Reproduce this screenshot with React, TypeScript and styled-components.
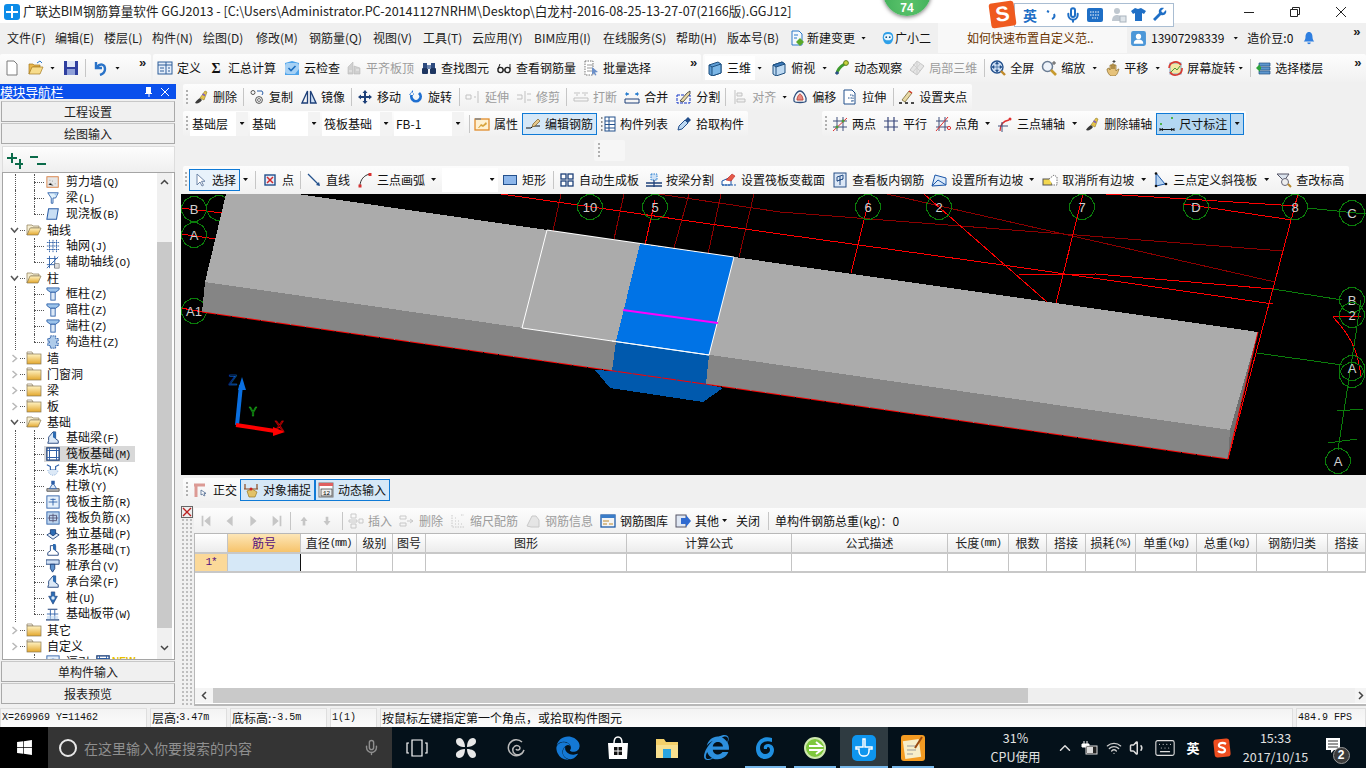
import React from "react";
import styled, { createGlobalStyle } from "styled-components";
import { FaEdge, FaInternetExplorer, FaWindows } from "react-icons/fa";
import { Mic, ChevronUp, Wifi, Volume1, Keyboard } from "lucide-react";

const Global = createGlobalStyle`
  html, body { margin: 0; padding: 0; background: #f0f0f0; overflow: hidden; }
  * { box-sizing: border-box; }
  #root { width: 1366px; height: 768px; }
`;
const CJK = `"Noto Sans CJK SC", "Liberation Sans", sans-serif`;
const MONO = `"Liberation Mono", "Noto Sans CJK SC", monospace`;

/* ---------- small drawings ---------- */
const B = "#2b5ea7", L = "#9cc3ea", D = "#1d3f78";
const icons: Record<string, React.ReactNode> = {
  new: <path d="M3 1h7l3 3v11H3z" fill="#fff" stroke="#7a7a7a" />,
  open: <><path d="M1 14V4h4l1 1h6v2H5l-4 7z" fill="#e8b64c" stroke="#a57a20" strokeWidth=".7" /><path d="M1 14l3-7h11l-3 7z" fill="#f7dc8b" stroke="#a57a20" strokeWidth=".7" /><path d="M9 3l3-2 2 2" fill="none" stroke="#2b78c9" /></>,
  save: <><rect x="1" y="1" width="14" height="14" fill="#2f3f9f" /><rect x="4" y="1" width="8" height="6" fill="#dfe6f6" /><rect x="4" y="9" width="8" height="6" fill="#8fa0d8" /></>,
  undo: <path d="M4 2v6h6M5 7c3-4 8-3 8 2 0 3-2 5-5 6" fill="none" stroke="#2a73c8" strokeWidth="2.4" />,
  def: <><rect x="1" y="2" width="14" height="12" fill="#e5eefa" stroke="#2f5f9a" /><path d="M1 5h14M9 2v12M3 8h4M3 11h4M11 8h2M11 11h2" stroke="#2f5f9a" /></>,
  sum: <text x="8" y="13" fontSize="14" fontWeight="700" textAnchor="middle" fontFamily="Liberation Serif" fill="#111">Σ</text>,
  cloud: <><path d="M1 3l7-2 7 2v12H1z" fill="#4da3ea" /><path d="M4 3h8a3 3 0 0 1 3 3v3l-4 5H4a3 3 0 0 1-3-3V6a3 3 0 0 1 3-3z" fill="#fff" opacity=".5" /><path d="M4.5 8l2.5 2.5 4.5-4.5" fill="none" stroke="#1d6fc0" strokeWidth="1.6" /></>,
  flat: <><path d="M2 14V7l5-5v12zM8 14V6l6 2v6z" fill="#bdbdbd" stroke="#999" strokeWidth=".6" /><path d="M3 11h3M10 10h3" stroke="#e8e8e8" /></>,
  binoc: <><rect x="2" y="3" width="4" height="5" fill="#2c4a7e" /><rect x="10" y="3" width="4" height="5" fill="#2c4a7e" /><rect x="1" y="8" width="6" height="6" rx="1" fill="#1d3560" /><rect x="9" y="8" width="6" height="6" rx="1" fill="#1d3560" /><rect x="6" y="5" width="4" height="4" fill="#6e87b0" /></>,
  glass: <><circle cx="4.5" cy="10" r="2.6" fill="none" stroke="#222" strokeWidth="1.4" /><circle cx="11.5" cy="10" r="2.6" fill="none" stroke="#222" strokeWidth="1.4" /><path d="M7 10h2M2 9l2-5M14 9V4" stroke="#222" /></>,
  batch: <><path d="M2 1h8v14H2z" fill="#fff" stroke="#777" strokeDasharray="1.5 1" /><path d="M4 5h6M4 8h5M4 11h5" stroke="#999" /><path d="M9 7l6 5-3 .5 1.5 2.5-1.4.6-1.4-2.5L9 15z" fill="#6b8fc9" /></>,
  cube: <><path d="M2 5l9-3 3 2v9l-9 3-3-2z" fill="#5f9fd6" stroke="#1d4f7f" /><path d="M5 7l9-3v9l-9 3z" fill="#7ab6e6" stroke="#1d4f7f" /><path d="M2 5l3 2" stroke="#1d4f7f" /></>,
  top: <><path d="M2 5l9-3 3 2v9l-9 3-3-2z" fill="#bdd9f2" stroke="#1d4f7f" /><path d="M5 7l9-3-3-2-9 3z" fill="#3d79b8" stroke="#1d4f7f" /><path d="M5 7v9" stroke="#1d4f7f" /></>,
  orbit: <><path d="M3 14c0-4 4-8 9-11" stroke="#3f9a2e" strokeWidth="3" fill="none" /><path d="M2 12l2 2" stroke="#2d4d8c" strokeWidth="3" /><circle cx="12" cy="3" r="2.4" fill="#c8d43c" stroke="#5f7a1e" /></>,
  local: <><path d="M8 1l7 5-7 9-7-5z" fill="#dcdcdc" stroke="#aaa" /><path d="M4 4l7 7M8 1v14M12 3L4 12" stroke="#bbb" /></>,
  full: <><circle cx="7" cy="7" r="6" fill="#cfe0f5" stroke="#23508c" strokeWidth="1.4" /><path d="M7 2v10M2 7h10M7 2L5.5 4h3zM7 12l-1.5-2h3zM2 7l2-1.5v3zM12 7l-2-1.5v3z" stroke="#23508c" fill="#23508c" strokeWidth=".6" /><path d="M11 11l4 4" stroke="#c08a2a" strokeWidth="2.4" /></>,
  zoom: <><circle cx="6.5" cy="6.5" r="5" fill="#eef3fa" stroke="#6b7d94" strokeWidth="1.5" /><path d="M10 10l5 5" stroke="#c79a2e" strokeWidth="2.6" /><path d="M13 1v4M11 3h4" stroke="#555" /></>,
  pan: <><path d="M3 9l2-1 1 2V5h2v4-5h2v5-4h2v6c1-1 2-2 3-2-1 3-2 7-5 7H7C5 15 3 12 3 9z" fill="#e6c27a" stroke="#8a6a28" strokeWidth=".7" /><path d="M10 0v3M8.5 1.5h3" stroke="#444" /></>,
  rotate: <><rect x="3" y="3" width="11" height="11" fill="#f4e7a4" stroke="#7aa4c8" /><path d="M4 12l4-4 2 2 3-4" stroke="#4b9a3a" fill="none" /><path d="M2 8a6.5 6.5 0 0 1 12-3M15 8a6.5 6.5 0 0 1-12 4" stroke="#d83a30" strokeWidth="1.6" fill="none" /></>,
  floor: <><path d="M4 3h11v3H4zM4 7h11v3H4zM4 11h11v3H4z" fill="#5e97cf" stroke="#1d4f7f" strokeWidth=".7" /><path d="M1 8l4-4v2.5h1v3H5V12z" fill="#2da33b" /></>,
  del: <><path d="M2 14c2 1 5 0 7-3L7 9c-2 1-4 3-5 5z" fill="#3a3a3a" /><path d="M7 9l5-7 2 1-3 8z" fill="#e6c34a" stroke="#8e7a25" strokeWidth=".6" /><path d="M9.5 5l2.5 1.5" stroke="#7a5dc0" strokeWidth="1.5" /></>,
  copy: <><circle cx="4" cy="3.5" r="2" fill="none" stroke="#555" /><circle cx="10" cy="11" r="3.4" fill="none" stroke="#555" /><circle cx="10" cy="11" r="1.5" fill="none" stroke="#777" /><path d="M8 2h5l1 2-1 2" stroke="#2b5ea7" fill="none" /></>,
  mirror: <><path d="M6.5 2v12H1z" fill="none" stroke={D} strokeWidth="1.3" /><path d="M9.5 2v12H15z" fill="#cfe0f5" stroke={D} strokeWidth="1.3" /></>,
  move: <path d="M8 1l2.5 3H9v3h3V5.5L15 8l-3 2.5V9H9v3h1.500L8 15l-2.500-3H7V9H4v1.500L1 8l3-2.500V7h3V4H5.500z" fill={D} />,
  rot: <path d="M4 3a6 6 0 1 0 8 0l-2 2a3.200 3.200 0 1 1-4 0zM5 1v5H1z" fill="#1f6fd0" />,
  ext: <path d="M1 6h5v4H1zM9 8h2M13 2v12" stroke="#a5a5a5" fill="none" />,
  trim: <path d="M1 6h5v4H1M9 2v12M11 5h4M11 11h4" stroke="#a5a5a5" fill="none" />,
  brk: <path d="M1 4h6M9 4h6M1 12h14V9H1zM5 6l-2 0M13 6h-2" stroke="#a5a5a5" fill="none" />,
  merge: <><path d="M1 10h14v4H1z" fill="none" stroke={D} /><path d="M2 3l3 2-3 2zM14 3l-3 2 3 2z" fill="#2b7fd0" /><path d="M1 5h4M11 5h4" stroke="#2b7fd0" /></>,
  split: <><rect x="1" y="6" width="13" height="8" fill="none" stroke="#1235c8" strokeDasharray="3 1" /><path d="M4 12l7-8 3-2 0 3-7 8z" fill="#e8d9a6" stroke="#333" strokeWidth=".8" /></>,
  align: <path d="M3 1v14M5 4h5v3H5zM5 10h8v3H5z" stroke="#a5a5a5" fill="#eee" />,
  offset: <><path d="M2 12c-1-4 3-10 6-10s7 6 6 10c0 2-12 2-12 0z" fill="none" stroke="#2e4f7e" strokeWidth="1.3" /><path d="M5 11c0-3 2-6 3-6s3 3 3 6z" fill="#e88a80" stroke="#c2483c" /></>,
  stretch: <><path d="M2 1h8l3 3v11H2z" fill="#fff" stroke="#23508c" /><path d="M8 6h3M6 9h5M9 12h2M11 6v7" stroke="#23508c" strokeDasharray="1.5 1" /></>,
  grip: <><path d="M3 11l7-9 3 2-7 9z" fill="#e8d9a6" stroke="#6a5a22" strokeWidth=".7" /><path d="M10 2l3 2" stroke="#d83a30" strokeWidth="1.5" /><path d="M0 14h3M6 14h3M12 14h3" stroke="#111" strokeWidth="1.5" /></>,
  attr: <><rect x="1" y="3" width="14" height="11" fill="#fff1d2" stroke="#e08d2c" strokeWidth="1.3" /><path d="M1 3h6" stroke="#888" strokeWidth="1.6" /><path d="M4 12l3-4 2 1 3-3 1 2-4 3-2-1-2 2z" fill="#d8a43c" /></>,
  edit: <><path d="M1 12h5l2-2h7" stroke="#111" fill="none" /><path d="M8 8l5-5 2 2-5 5-3 1z" fill="#e6c98b" stroke="#7a5a22" strokeWidth=".7" /></>,
  list: <><path d="M1 2h2M1 6h2M1 10h2M1 14h2" stroke="#222" strokeWidth="1.2" strokeDasharray="1.5 1" /><rect x="5" y="1" width="10" height="14" fill="#fff" stroke="#23508c" /><path d="M5 5h10M5 8.5h10M5 12h10M9 1v14" stroke="#23508c" /></>,
  pick: <><path d="M2 14l1-4 6-6 3 3-6 6z" fill="#bcd8f2" stroke="#234f8c" /><path d="M9 4l3-3 3 3-3 3z" fill="#234f8c" /></>,
  two: <><path d="M1 5h14M1 11h14M5 1v14M11 1v14" stroke="#40507c" /><path d="M1 15L15 2" stroke="#e03030" /><circle cx="5" cy="11" r="1.5" fill="#4b9a3a" /><circle cx="11" cy="5" r="1.5" fill="#4b9a3a" /></>,
  para: <path d="M1 5h14M1 11h14M5 1v14M11 1v14" stroke="#39477a" strokeWidth="1.2" />,
  angle: <><path d="M1 5h12M1 11h12M4 1v14M10 1v14" stroke="#40507c" /><path d="M1 15L13 1" stroke="#e03030" /><circle cx="14" cy="12" r="1.6" fill="none" stroke="#e03030" /></>,
  arc3: <><path d="M3 15c0-7 3-10 9-11" stroke="#e03030" fill="none" strokeWidth="1.3" /><path d="M1 10h10M5 6v10" stroke="#40507c" /><circle cx="13" cy="3" r="1.5" fill="#e03030" /></>,
  dim: <><path d="M1 12v3M15 12v3M1 13.5h14" stroke="#111" /><path d="M1 13.5l3-1.5v3zM15 13.5l-3-1.500v3z" fill="#111" /><rect x="1" y="7" width="2" height="2" fill="#4bb34a" /><rect x="12" y="1" width="2" height="2" fill="#4bb34a" /></>,
  sel: <path d="M5 2v11l3-3 2 4 1.5-.7-2-4H13z" fill="#fff" stroke="#6f86a8" />,
  pt: <><rect x="3" y="3" width="10" height="10" fill="#e8eefb" stroke="#23508c" strokeWidth="1.4" /><path d="M5 5l6 6M11 5l-6 6" stroke="#d02a2a" strokeWidth="1.5" /></>,
  line: <><path d="M2 2l11 11" stroke="#23508c" strokeWidth="1.3" /><path d="M14 14l-4-1 3-3z" fill="#23508c" /></>,
  arc: <><path d="M3 14c0-6 4-11 10-12" stroke="#333" fill="none" /><rect x="1.5" y="12.5" width="3" height="3" fill="#d83030" /><rect x="11.5" y="1" width="3" height="3" fill="#d83030" /></>,
  rect: <rect x="1.500" y="3.500" width="13" height="9" fill="#8db6ea" stroke="#23508c" />,
  auto: <><rect x="2" y="2" width="5" height="5" fill="#fff" stroke={D} strokeWidth="1.3" /><rect x="9" y="2" width="5" height="5" fill="#fff" stroke={D} strokeWidth="1.3" /><rect x="2" y="9" width="5" height="5" fill="#fff" stroke={D} strokeWidth="1.3" /><rect x="9" y="9" width="5" height="5" fill="#fff" stroke={D} strokeWidth="1.3" /></>,
  beam: <><rect x="5" y="2" width="6" height="6" fill="#cfe2f6" stroke="#2b7fd0" strokeDasharray="1.5 1" /><path d="M0 11h16M0 14h16M8 8v7" stroke={D} strokeWidth="1.3" /></>,
  varsec: <><path d="M1 9l9-4v8H1z" fill="#fff" stroke="#1b56a8" /><path d="M5 8l6-6 3 2-4 5z" fill="#e55a48" stroke="#b22" strokeWidth=".6" /><path d="M1 13h14" stroke="#1b56a8" strokeDasharray="2 1" /></>,
  view: <><rect x="2" y="1" width="12" height="14" fill="#dbe7f6" stroke="#274f86" /><path d="M5 5l6-2v4l-6 2zM5 9l6-2M8 4v9" stroke="#274f86" fill="none" /></>,
  slope: <><path d="M1 14l3-11 11 3v7z" fill="#dceaf9" stroke="#1b56a8" /><path d="M1 14l6-6 8 5" stroke="#1b56a8" fill="none" /></>,
  noslope: <><rect x="1" y="7" width="9" height="6" fill="#f3d74f" stroke="#555" /><path d="M7 7l5-4 3 2v8h-4" fill="#fff" stroke="#777" strokeDasharray="1.5 1" /></>,
  s3: <><path d="M3 1l9 11-9 2z" fill="#b7d4f2" stroke="#1b56a8" /><circle cx="3" cy="1.5" r="1.3" fill="#111" /><circle cx="3" cy="14" r="1.3" fill="#111" /><circle cx="13" cy="12" r="1.3" fill="#111" /></>,
  height: <><path d="M1 2h12L8 9z" fill="#dce4ee" stroke="#556" /><circle cx="9" cy="10" r="3.5" fill="#eee" stroke="#667" /><path d="M12 12l3 3" stroke="#b98a2e" strokeWidth="2" /></>,
  ortho: <><path d="M3 15V3M1 3h11" stroke="#dc9a94" strokeWidth="3" /><path d="M8 8v5l1.5-1 1.5 2 1-.6-1-2h2z" fill="#fff" stroke="#4f6a90" strokeWidth=".8" /></>,
  snap: <><path d="M2 2v5M14 2v5M1 7h14" stroke="#8a4a22" strokeWidth="1.2" /><path d="M4 9l5-2 5 3-2 5H6z" fill="#e2c267" stroke="#9a7a22" strokeWidth=".7" /><circle cx="8" cy="7" r="1.5" fill="#c22" /></>,
  dyn: <><rect x="1" y="1" width="14" height="14" fill="#fff" stroke="#777" /><rect x="1" y="1" width="14" height="3" fill="#e06060" /><rect x="3" y="7" width="11" height="7" fill="#eee" stroke="#333" strokeWidth=".7" /><text x="8.5" y="13" fontSize="6" textAnchor="middle" fontFamily="Liberation Mono" fill="#000">12</text></>,
  first: <path d="M3 2v12h2V2zM13 2v12L6 8z" fill="#c6c6c6" />,
  prev: <path d="M11 2v12L4 8z" fill="#c6c6c6" />,
  next: <path d="M5 2v12l7-6z" fill="#c6c6c6" />,
  last: <path d="M13 2v12h-2V2zM3 2v12l7-6z" fill="#c6c6c6" />,
  up: <path d="M8 3l4 5H9.5v5h-3V8H4z" fill="#c6c6c6" />,
  down: <path d="M8 13l4-5H9.5V3h-3v5H4z" fill="#c6c6c6" />,
  ins: <path d="M3 1h5v4H3zM3 11h5v4H3zM1 7h8v2H1zM11 6h4v4h-4z" fill="none" stroke="#b0b0b0" />,
  delr: <path d="M1 3h6v3H1zM1 10h6v3H1zM8 8h6M11 6l3 2-3 2" fill="none" stroke="#b0b0b0" />,
  scale: <path d="M2 2v12h12M5 11h1M8 11h1M11 11h1M5 8h1M8 8h1M5 5h1M11 2h3" fill="none" stroke="#b0b0b0" strokeDasharray="1.5 1" />,
  info: <path d="M2 13l5-10h4l3 4v7H6z" fill="#ddd" stroke="#b0b0b0" />,
  lib: <><rect x="1" y="2" width="14" height="12" fill="#f4f4f4" stroke="#1e5ba8" strokeWidth="1.3" /><rect x="1" y="2" width="14" height="3" fill="#3a7cc8" /><path d="M3 8h6M3 11h4M9 11h4" stroke="#c08a2a" /></>,
  other: <><rect x="1" y="2" width="10" height="12" fill="#dfe7f3" stroke="#556" /><path d="M6 5h5V2l5 6-5 6v-3H6z" fill="#2f6ad0" /></>,
  user: <><rect x="1" y="1" width="14" height="14" rx="2" fill="#4c97d8" /><circle cx="8" cy="6" r="2.5" fill="#fff" /><path d="M3.5 13c0-3 2-4 4.5-4s4.5 1 4.5 4z" fill="#fff" /></>,
  bell: <path d="M8 1c3 0 4 3 4 6 0 2 1 4 2 5H2c1-1 2-3 2-5 0-3 1-6 4-6zM6 13h4a2 2 0 0 1-4 0z" fill="#2f7fe0" />,
  doc: <><path d="M3 1h7l3 3v11H3z" fill="#f4f8fc" stroke="#2b78c9" /><path d="M5 5h4M5 8h3" stroke="#2b78c9" /><path d="M11 8l4 4-4 4-4-4z" fill="#5aa82a" /></>,
  face: <><path d="M8 1c4 0 6 2 6 6s-2 8-6 8-6-4-6-8 2-6 6-6z" fill="#2fa0e8" /><ellipse cx="8" cy="7" rx="4.6" ry="3.6" fill="#e8f6ff" /><circle cx="6" cy="7" r="1" fill="#14527e" /><circle cx="10" cy="7" r="1" fill="#14527e" /></>,
  plus: <path d="M4 0v4H0v2h4v4h2V6h4V4H6V0zM12 6v4H8v2h4v4h2v-4h2v-2h-2V6z" fill="#0b6b4a" />,
  minus: <path d="M0 3h8v2H0zM7 10h9v2H7z" fill="#0b6b4a" />,
  /* tree */
  wall: <><rect x="1" y="2" width="13" height="12" fill="#e6e6e6" stroke="#d77a3a" /><path d="M3 11l2-2 3 3M7 7h1M10 10h1M4 6h1" stroke="#999" /></>,
  tbeam: <><path d="M2 2h12L11 8H8v6H6V8z" fill="#dff0fb" stroke={B} /><path d="M9 3l3-1v4z" fill={L} /></>,
  slab: <path d="M3 2h11l-2 12H1z" fill="#c8def4" stroke={B} strokeWidth="1.2" />,
  grid: <path d="M1 4h14M1 8h14M1 12h14M4 1v14M8 1v14M12 1v14" stroke={B} strokeDasharray="2 .5" />,
  auxg: <><path d="M1 4h12M1 11h12M4 1v14M10 1v14" stroke={B} /><path d="M1 15L14 2" stroke={B} /><rect x="10" y="10" width="5" height="5" fill="#ddd" stroke="#555" strokeWidth=".6" /></>,
  col: <><path d="M1 1h14v2L11 6H5L1 3z" fill={L} stroke={B} /><rect x="5.5" y="6" width="5" height="9" fill="#dce9f7" stroke={B} /></>,
  scol: <path d="M5 1h6v3h3v3h-2v2h2v3h-3v3H5v-3H2V9h2V7H2V4h3z" fill="#aecbea" stroke={B} strokeDasharray="2 .6" />,
  fb: <><path d="M2 14h12v-3l-3-2V1H8L3 7v4z" fill="#dce9f7" stroke={D} /><path d="M8 1l3 0v8l-3-2z" fill="#2b6cb4" /></>,
  raft: <><rect x="1" y="1" width="14" height="14" fill="#fff" stroke={D} strokeWidth="1.5" /><rect x="4" y="4" width="8" height="8" fill="#fff" stroke={D} /><path d="M1 4h14M1 12h14M4 1v14M12 1v14" stroke={B} /></>,
  pit: <><path d="M1 2l4 2v4h6V4l4-2" fill="none" stroke={B} strokeWidth="1.3" /><path d="M2 8c1 4 3 6 6 6s5-2 6-6" fill="#dce9f7" stroke="#8fb0d8" strokeDasharray="1 1" /></>,
  pier: <><path d="M1 11h14v3H1z" fill="#bbb" stroke="#555" /><path d="M4 11l3-5h2l3 5z" fill="#dce9f7" stroke={B} /><path d="M6 2h4v4H6z" fill={B} /></>,
  rm: <><rect x="1" y="1" width="14" height="14" fill="#e5f0fb" stroke={B} /><path d="M3 8h10M8 4v8M5 5h6" stroke={B} /></>,
  rn: <><rect x="1" y="1" width="14" height="14" fill="#bdd5ef" stroke={B} /><path d="M2 8h12M8 3v10M4 5h8v6H4z" stroke="#557" fill="none" /></>,
  iso: <><path d="M1 9l7-4 7 4-7 5z" fill="#e5f0fb" stroke={D} /><path d="M5 3h6v5l-3 2-3-2z" fill="#2b6cb4" stroke={D} /></>,
  strip: <><path d="M2 14h12v-3l-3-2V3H5v6L2 11z" fill="#fff" stroke={D} /><path d="M8 1h3v8l-3-2z" fill="#2b6cb4" /></>,
  cap: <><path d="M0 1h15v5H0z" fill="#cfe0f5" stroke={D} /><path d="M5 6h5v5l-2.5 4L5 11z" fill="#5f94d0" stroke={D} /></>,
  pile: <><path d="M6 1h4v5h3L8 15 3 6h3z" fill="#2b6cb4" stroke={D} strokeWidth=".7" /><circle cx="8" cy="8" r="2" fill="#dce9f7" /></>,
  band: <><path d="M0 14h15v1.5H0zM2 2h11v1H2z" fill={D} /><path d="M5 3v11M10 3v11M1 8h13" stroke={B} /><rect x="1" y="10" width="13" height="4" fill="#bcd6f0" opacity=".6" /></>,
};
const IconSvg = styled.svg<{ $s?: number }>`
  width: ${(p) => p.$s ?? 16}px;
  height: ${(p) => p.$s ?? 16}px;
  flex: none;
  display: block;
`;
const Ico: React.FC<{ n: string; s?: number }> = ({ n, s }) => (
  <IconSvg $s={s} viewBox="0 0 16 16">{icons[n]}</IconSvg>
);

/* ---------- shell ---------- */
const Screen = styled.div`
  position: relative;
  width: 1366px;
  height: 768px;
  overflow: hidden;
  display: flex;
  flex-direction: column;
  background: #f0f0f0;
  font: 12px/1 ${CJK};
  color: #111;
`;
const TitleBar = styled.header`
  height: 23px;
  flex: none;
  background: #fff;
  display: flex;
  align-items: center;
  padding-left: 4px;
`;
const TitleText = styled.span`
  margin-left: 3px;
  font-size: 12.6px;
  white-space: nowrap;
  color: #222;
`;
const WinControls = styled.div`
  margin-left: auto;
  margin-right: 2px;
  display: flex;
  align-items: center;
`;
const WinBtn = styled.div`
  width: 46px;
  height: 23px;
  display: flex;
  align-items: center;
  justify-content: center;
`;
const Menu = styled.nav`
  height: 30px;
  flex: none;
  display: flex;
  align-items: center;
  padding-left: 7px;
  white-space: nowrap;
`;
const MenuItem = styled.span<{ $w: number }>`
  width: ${(p) => p.$w}px;
  flex: none;
  color: #222;
`;
const Notice = styled.div`
  width: 189px;
  height: 30px;
  margin-left: 7px;
  padding-left: 29px;
  flex: none;
  display: flex;
  align-items: center;
  background: #f8f8f8;
  color: #6b3500;
`;
const Tool = styled.div<{ $ml?: number; $off?: boolean; $gap?: number }>`
  display: inline-flex;
  align-items: center;
  flex: none;
  gap: ${(p) => p.$gap ?? 4}px;
  margin-left: ${(p) => p.$ml ?? 0}px;
  color: ${(p) => (p.$off ? "#9c9c9c" : "#111")};
  white-space: nowrap;
  svg { ${(p) => (p.$off ? "filter: grayscale(1); opacity: .65;" : "")} }
`;
const HotTool = styled(Tool)<{ $fill?: string }>`
  height: 22px;
  padding: 0 3px 0 2px;
  border: 1px solid #0f7ad6;
  background: ${(p) => p.$fill ?? "#d6e8f7"};
`;
const Arrow = styled.i<{ $ml?: number }>`
  display: block;
  flex: none;
  width: 5px;
  height: 3px;
  margin-left: ${(p) => p.$ml ?? 0}px;
  background: #111;
  clip-path: polygon(0 0, 100% 0, 50% 100%);
`;
const ArrowBox = styled.div`
  width: 13px;
  height: 22px;
  flex: none;
  display: flex;
  align-items: center;
  justify-content: center;
  border: 1px solid #0f7ad6;
  border-left: 0;
  background: #b8d9f3;
`;
const Sep = styled.i<{ $ml?: number }>`
  display: block;
  width: 1px;
  height: 18px;
  flex: none;
  margin-left: ${(p) => p.$ml ?? 0}px;
  background: #c6c6c6;
`;
const More = styled.span<{ $ml?: number }>`
  margin-left: ${(p) => p.$ml ?? 0}px;
  margin-top: 2px;
  align-self: flex-start;
  flex: none;
  width: 8px;
  font: 700 13px/1 "Liberation Sans", sans-serif;
  color: #222;
`;
const Grip = styled.div<{ $w?: number }>`
  width: ${(p) => p.$w ?? 7}px;
  height: 15px;
  flex: none;
  display: flex;
  justify-content: center;
  &::before {
    content: "";
    width: 2px;
    height: 100%;
    background: repeating-linear-gradient(to bottom, #b0b0b0 0 2px, transparent 2px 4px);
  }
`;
const Bar = styled.div<{ $h: number; $ml?: number; $pr?: number }>`
  display: inline-flex;
  align-items: center;
  flex: none;
  height: ${(p) => p.$h}px;
  margin-left: ${(p) => p.$ml ?? 0}px;
  padding-right: ${(p) => p.$pr ?? 4}px;
  background: linear-gradient(#fdfdfd, #f1f1f1);
  border-radius: 2px;
`;
const MainToolRow = styled.div`
  height: 28px;
  flex: none;
  margin: 1px 0 2px;
  display: flex;
`;
const ThreeDBack = styled.div`
  display: inline-flex;
  align-items: center;
  flex: none;
  height: 24px;
  background: #fff;
  padding-right: 4px;
  margin-left: 2px;
  margin-right: -4px;
`;

/* ---------- left module panel ---------- */
const Body = styled.div`
  flex: 1;
  min-height: 0;
  display: flex;
`;
const Side = styled.aside`
  width: 176px;
  flex: none;
  display: flex;
  flex-direction: column;
  margin-right: 5px;
`;
const SideHead = styled.div`
  height: 15px;
  flex: none;
  display: flex;
  align-items: center;
  justify-content: space-between;
  background: #0a50ec;
  color: #fff;
  font-size: 13px;
  padding-right: 4px;
  letter-spacing: -.4px;
`;
const SideBtn = styled.div<{ $mt: number }>`
  height: 21px;
  flex: none;
  margin: ${(p) => p.$mt}px 1px 0;
  display: flex;
  align-items: center;
  justify-content: center;
  background: #f0f0f0;
  border: 1px solid #a9a9a9;
  border-top-color: #c8c8c8;
  color: #222;
`;
const TreeTools = styled.div`
  height: 26px;
  flex: none;
  margin: 2px 1px 0 2px;
  padding: 2px 0 0 4px;
  display: flex;
  align-items: center;
  gap: 7px;
  background: linear-gradient(#fdfdfd, #efefef);
  border: 1px solid #ddd;
  border-bottom: 0;
`;
const TreeBox = styled.div`
  height: 488px;
  flex: none;
  margin: 0 1px 0 2px;
  display: flex;
  border: 1px solid #a5a5a5;
  background: #fff;
  overflow: hidden;
`;
const TreeList = styled.ul`
  flex: 1;
  min-width: 0;
  margin: 0;
  padding: 1px 0 0;
  list-style: none;
  overflow: hidden;
`;
const TreeRow = styled.li<{ $branch?: boolean; $last?: boolean; $top?: boolean }>`
  position: relative;
  height: 16px;
  display: flex;
  align-items: center;
  padding-left: ${(p) => (p.$top ? 7 : 41)}px;
  white-space: nowrap;
  ${(p) =>
    p.$branch
      ? `&::before { content:""; position:absolute; left:31px; top:0; bottom:${p.$last ? 8 : 0}px; border-left:1px dotted #555; }
         &::after { content:""; position:absolute; left:31px; width:10px; top:8px; border-top:1px dotted #555; }`
      : ""}
  ${(p) =>
    p.$top
      ? `&::after { content:""; position:absolute; left:17px; width:5px; top:8px; border-top:1px dotted #555; }`
      : ""}
`;
const Trunk = styled.i`
  position: absolute;
  left: 12px;
  top: 0;
  bottom: 0;
  border-left: 1px dotted #555;
`;
const Node = styled.span<{ $sel?: boolean; $top?: boolean }>`
  display: inline-flex;
  align-items: center;
  height: 16px;
  gap: ${(p) => (p.$top ? 5 : 6)}px;
  padding-left: 2px;
  padding-right: ${(p) => (p.$sel ? 5 : 0)}px;
  background: ${(p) => (p.$sel ? "#d8d8d8" : "transparent")};
`;
const TreeChevron = styled.svg`
  width: 9px;
  height: 9px;
  flex: none;
  margin-right: 5px;
`;
const Code = styled.span`
  font: 11px/1 ${MONO};
  letter-spacing: -1.2px;
`;
const NewMark = styled.span`
  margin-left: -4px;
  color: #e8c000;
  font: 700 10px/1 "Liberation Sans", sans-serif;
`;
const VScroll = styled.div`
  width: 15px;
  flex: none;
  margin-right: 2px;
  display: flex;
  flex-direction: column;
  background: #f0f0f0;
`;
const ScrollEnd = styled.div<{ $h: number; $pos: string }>`
  height: ${(p) => p.$h}px;
  flex: none;
  display: flex;
  justify-content: center;
  align-items: ${(p) => p.$pos};
  padding: 5px 0 7px;
`;
const ScrollThumb = styled.div`
  flex: 1;
  background: #c9c9c9;
`;

/* ---------- main column ---------- */
const Main = styled.main`
  flex: 1;
  min-width: 0;
  display: flex;
  flex-direction: column;
`;
const Row = styled.div<{ $mt?: number }>`
  display: flex;
  flex: none;
  margin-top: ${(p) => p.$mt ?? 0}px;
  margin-left: 2px;
`;
const Combo = styled.div<{ $w: number; $ml?: number }>`
  width: ${(p) => p.$w}px;
  height: 24px;
  flex: none;
  margin-left: ${(p) => p.$ml ?? 0}px;
  display: flex;
  align-items: center;
  justify-content: space-between;
  background: #fff;
  padding-left: 2px;
  & > span { white-space: nowrap; }
`;
const ComboArrow = styled.div<{ $plain?: boolean }>`
  width: 12px;
  height: 100%;
  display: flex;
  align-items: center;
  justify-content: center;
  background: ${(p) => (p.$plain ? "transparent" : "#f3f3f3")};
`;
const FloatGrip = styled.div`
  height: 21px;
  margin: 4px 0 5px 413px;
  width: 31px;
  flex: none;
  padding-left: 2px;
  display: flex;
  align-items: center;
  background: #f6f6f6;
  border-radius: 2px;
`;
const Viewport = styled.div`
  height: 281px;
  flex: none;
  background: #000;
  margin-top: 1px;
  svg { display: block; }
`;
const Bottom = styled.section`
  height: 200px;
  flex: none;
  margin-top: 5px;
  display: flex;
`;
const DockStrip = styled.div`
  width: 13px;
  flex: none;
  display: flex;
  flex-direction: column;
`;
const DockClose = styled.div`
  height: 12px;
  width: 12px;
  flex: none;
  background: #eee;
  border: 1px solid #666;
  display: flex;
  align-items: center;
  justify-content: center;
`;
const DockDots = styled.div`
  flex: 1;
  background-image: radial-gradient(#bdbdbd 1px, transparent 1.2px);
  background-size: 4px 4px;
`;
const DockBody = styled.div`
  flex: 1;
  min-width: 0;
  display: flex;
  flex-direction: column;
`;
const GridBar = styled.div`
  height: 25px;
  flex: none;
  margin-top: 2px;
  display: flex;
  align-items: center;
  background: linear-gradient(#fdfdfd, #f0f0f0);
`;
const TableBox = styled.div`
  flex: 1;
  min-height: 0;
  display: flex;
  flex-direction: column;
  background: #fff;
  border-top: 1px solid #b8b8b8;
  border-left: 1px solid #b8b8b8;
  border-bottom: 2px solid #b8b8b8;
  overflow: hidden;
`;
const COLS = "33px 73px 56px 36px 33px 201px 165px 156px 61px 38px 39px 50px 61px 60px 71px 38px";
const Head = styled.div`
  display: grid;
  grid-template-columns: ${COLS};
  height: 20px;
  flex: none;
  border-bottom: 2px solid #c8c8c8;
`;
const HeadCell = styled.div<{ $cur?: boolean }>`
  display: flex;
  align-items: center;
  justify-content: center;
  overflow: hidden;
  white-space: nowrap;
  border-right: 1px solid #c4c4c4;
  background: ${(p) => (p.$cur ? "linear-gradient(#fde6b7,#f6c36b)" : "linear-gradient(#fff,#ececec)")};
  color: ${(p) => (p.$cur ? "#55107e" : "#222")};
`;
const DataRow = styled.div`
  display: grid;
  grid-template-columns: ${COLS};
  height: 19px;
  flex: none;
  border-bottom: 2px solid #c8c8c8;
`;
const DataCell = styled.div<{ $tone?: string; $black?: boolean }>`
  display: flex;
  align-items: center;
  justify-content: center;
  background: ${(p) => p.$tone ?? "#fff"};
  border-right: 1px solid ${(p) => (p.$black ? "#111" : "#c4c4c4")};
  color: #55107e;
`;
const TableFill = styled.div`
  flex: 1;
`;
const HScroll = styled.div`
  height: 15px;
  flex: none;
  margin-bottom: 1px;
  display: flex;
  background: #efefef;
`;
const HEnd = styled.div<{ $w: number }>`
  width: ${(p) => p.$w}px;
  flex: none;
  display: flex;
  align-items: center;
  justify-content: center;
  background: #f4f4f4;
`;
const HThumb = styled.div`
  width: 815px;
  flex: none;
  background: #c9c9c9;
`;
const HTrack = styled.div`
  flex: 1;
`;

/* ---------- status + task bar ---------- */
const Status = styled.footer`
  height: 19px;
  flex: none;
  display: flex;
  gap: 3px;
`;
const StatusCell = styled.div<{ $w: number; $mono?: boolean }>`
  width: ${(p) => p.$w}px;
  flex: none;
  display: flex;
  align-items: center;
  padding-left: 1px;
  white-space: nowrap;
  background: linear-gradient(#f3f3f3, #fcfcfc);
  border: 1px solid #dedede;
  border-bottom: 0;
  ${(p) => (p.$mono ? `font: 10px/1 ${MONO};` : "")}
`;
const StatusMono = styled.span`
  font: 10px/1 ${MONO};
`;
const Task = styled.footer`
  height: 41px;
  flex: none;
  display: flex;
  background: #04111a;
  color: #e2e2e2;
`;
const StartBtn = styled.div`
  width: 48px;
  flex: none;
  background: #000;
  display: flex;
  align-items: center;
  justify-content: center;
`;
const Search = styled.div`
  width: 344px;
  flex: none;
  background: #343434;
  display: flex;
  align-items: center;
  padding-left: 10px;
  color: #8f8f8f;
  font-size: 14px;
`;
const SearchText = styled.span`
  margin-left: 6px;
`;
const SearchMic = styled.div`
  margin-left: auto;
  margin-right: 12px;
  display: flex;
  color: #8f8f8f;
`;
const Slot = styled.div<{ $w?: number; $ml?: number; $run?: boolean; $on?: boolean }>`
  width: ${(p) => p.$w ?? 49.5}px;
  margin-left: ${(p) => p.$ml ?? 0}px;
  flex: none;
  display: flex;
  align-items: center;
  justify-content: center;
  position: relative;
  background: ${(p) => (p.$on ? "#2f3b41" : "transparent")};
  ${(p) =>
    p.$run
      ? `&::after { content:""; position:absolute; bottom:0; height:2px; left:${p.$on ? 0 : 4}px; right:${p.$on ? 0 : 4}px; background:#77b7ea; }`
      : ""}
`;
const Cpu = styled.div`
  width: 70px;
  flex: none;
  margin-left: 43px;
  display: flex;
  flex-direction: column;
  align-items: center;
  justify-content: center;
  gap: 7px;
  font-size: 12.5px;
`;
const Tray = styled.div<{ $w: number }>`
  width: ${(p) => p.$w}px;
  flex: none;
  display: flex;
  flex-direction: column;
  align-items: center;
  justify-content: center;
  position: relative;
`;
const ClockBox = styled(Tray)`
  gap: 7px;
  font-size: 12.5px;
`;
const Badge = styled.span`
  position: absolute;
  left: 18px;
  top: 20px;
  width: 17px;
  height: 17px;
  border-radius: 50%;
  background: #3b3b3b;
  border: 1px solid #999;
  color: #fff;
  font: 700 12px/15px "Liberation Sans", sans-serif;
  text-align: center;
`;
const TrayIme = styled.span`
  font-size: 13px;
  font-weight: 700;
  color: #fff;
`;
/* floating widgets that lie over the title bar */
const Ball = styled.div`
  position: absolute;
  left: 883px;
  top: -32px;
  width: 48px;
  height: 48px;
  border-radius: 50%;
  background: radial-gradient(circle at 50% 75%, #5cc46c, #2fa24e);
  box-shadow: 0 1px 4px rgba(0, 0, 0, .55);
  color: #fff;
  font: 700 12px/1 "Liberation Sans", sans-serif;
  display: flex;
  align-items: flex-end;
  justify-content: center;
  padding-bottom: 2px;
`;
const ImeBar = styled.div`
  position: absolute;
  left: 990px;
  top: 2px;
  display: flex;
  align-items: center;
`;
const ImeLogo = styled.div`
  position: relative;
  z-index: 1;
  width: 25px;
  height: 25px;
  background: #ef5a1f;
  border-radius: 3px;
  transform: rotate(-8deg);
  color: #fff;
  font: 700 21px/24px "Liberation Sans", sans-serif;
  text-align: center;
`;
const ImePanel = styled.div`
  width: 160px;
  height: 24px;
  margin-left: -1px;
  background: #fff;
  border: 1px solid #a9bdd2;
  display: flex;
  align-items: center;
  padding-left: 8px;
  color: #1f6fc6;
`;
const ImeText = styled.span`
  font-size: 14px;
  font-weight: 700;
`;
const ImeSlot = styled.span<{ $ml?: number }>`
  display: flex;
  flex: none;
  margin-left: ${(p) => p.$ml ?? 0}px;
`;

/* ---------- data ---------- */
type T = { t: string; c?: string; i?: string; open?: boolean; last?: boolean; sel?: boolean };
const tree: T[] = [
  { t: "剪力墙", c: "(Q)", i: "wall" }, { t: "梁", c: "(L)", i: "tbeam" }, { t: "现浇板", c: "(B)", i: "slab", last: true },
  { t: "轴线", open: true }, { t: "轴网", c: "(J)", i: "grid" }, { t: "辅助轴线", c: "(O)", i: "auxg", last: true },
  { t: "柱", open: true }, { t: "框柱", c: "(Z)", i: "col" }, { t: "暗柱", c: "(Z)", i: "col" }, { t: "端柱", c: "(Z)", i: "col" }, { t: "构造柱", c: "(Z)", i: "scol", last: true },
  { t: "墙" }, { t: "门窗洞" }, { t: "梁" }, { t: "板" },
  { t: "基础", open: true }, { t: "基础梁", c: "(F)", i: "fb" }, { t: "筏板基础", c: "(M)", i: "raft", sel: true }, { t: "集水坑", c: "(K)", i: "pit" }, { t: "柱墩", c: "(Y)", i: "pier" },
  { t: "筏板主筋", c: "(R)", i: "rm" }, { t: "筏板负筋", c: "(X)", i: "rn" }, { t: "独立基础", c: "(P)", i: "iso" }, { t: "条形基础", c: "(T)", i: "strip" }, { t: "桩承台", c: "(V)", i: "cap" }, { t: "承台梁", c: "(F)", i: "fb" }, { t: "桩", c: "(U)", i: "pile" }, { t: "基础板带", c: "(W)", i: "band", last: true },
  { t: "其它" }, { t: "自定义" },
];
const Folder: React.FC<{ open?: boolean }> = ({ open }) => (
  <IconSvg viewBox="0 0 16 16">
    <defs><linearGradient id="fd" x1="0" y1="0" x2="0" y2="1"><stop offset="0" stopColor="#fff3c4" /><stop offset="1" stopColor="#e3a72c" /></linearGradient></defs>
    {open ? (
      <><path d="M1 13V3h5l1 1h6v2H5z" fill="#f6eed2" stroke="#8a7a55" strokeWidth=".7" /><path d="M1 13l3-7h11l-3 7z" fill="url(#fd)" stroke="#8a7a55" strokeWidth=".7" /></>
    ) : (
      <><path d="M1 4V2h5l1 2z" fill="#fff" stroke="#8a7a55" strokeWidth=".7" /><rect x="1" y="4" width="14" height="10" fill="url(#fd)" stroke="#8a7a55" strokeWidth=".7" /></>
    )}
  </IconSvg>
);
const Chevron: React.FC<{ open?: boolean }> = ({ open }) => (
  <TreeChevron viewBox="0 0 9 9">
    <path d={open ? "M1 2l3.5 4L8 2" : "M2.5 1L6.5 4.5 2.5 8"} fill="none" stroke={open ? "#555" : "#b8b8b8"} strokeWidth="1.5" />
  </TreeChevron>
);
const head: [React.ReactNode, boolean?][] = [
  [""], ["筋号", true], [<>直径<Code>(mm)</Code></>], ["级别"], ["图号"], ["图形"], ["计算公式"], ["公式描述"],
  [<>长度<Code>(mm)</Code></>], ["根数"], ["搭接"], [<>损耗<Code>(%)</Code></>], [<>单重<Code>(kg)</Code></>], [<>总重<Code>(kg)</Code></>], ["钢筋归类"], ["搭接"],
];

/* one toolbar command */
const T2: React.FC<{ i: string; t?: React.ReactNode; ml?: number; off?: boolean }> = ({ i, t, ml, off }) => (
  <Tool $ml={ml} $off={off}><Ico n={i} />{t && <span>{t}</span>}</Tool>
);

/* drawing of the 3D view */
const Bubble: React.FC<{ x: number; y: number; t?: string }> = ({ x, y, t }) => {
  const pts = Array.from({ length: 12 }, (_, k) => {
    const a = (k * Math.PI) / 6 + 0.26;
    return `${(x + 12.5 * Math.cos(a)).toFixed(1)},${(y + 12.5 * Math.sin(a)).toFixed(1)}`;
  }).join(" ");
  return (
    <g>
      <polygon points={pts} fill="none" stroke="#0b7d0b" />
      {t && <text x={x} y={y + 5} fontSize="13" textAnchor="middle" fontFamily="Liberation Sans" fill="#cfcfcf">{t}</text>}
    </g>
  );
};
const RL = "#ff0000", DR = "#8c0000", GL = "#0b7d0b";
const Scene: React.FC = () => (
  <svg width="1185" height="281" viewBox="181 194 1185 281" shapeRendering="crispEdges">
    <g fill="none" stroke={DR}>
      <path d="M561 194l-8 37M624 194l-10 45M689 194l-15 54M721 194l-13 60M754 194l-15 63" />
      <path d="M658 194L780 212 1283 251M887 194L1275 282" />
    </g>
    <g fill="none" stroke={RL}>
      <path d="M501 194L780 234 1010 266 1273 304M1019 275L1096 274 1273 289M1106 194L1297 206M1184 204L1292 220" />
      <path d="M181 208L222 213M181 234L216 239M181 308L203 312M655 200L645 245M869 200L851 273M1083 194L1056 303M1298 194L1228 459M924 194L1047 302" />
      <path d="M1333 317L1361 316M1333 317C1350 335 1358 350 1361 377" />
    </g>
    <g fill="none" stroke={GL}>
      <path d="M1307 208L1366 214M1273 289L1342 300M1257 353L1342 365M1361 300L1338 450M1337 411L1363 409M1328 443L1357 439" />
    </g>
    <Bubble x={194} y={209} t="B" />
    <Bubble x={219} y={208} />
    <Bubble x={194} y={235} t="A" />
    <Bubble x={194} y={311} t="A1" />
    <Bubble x={590} y={207} t="10" />
    <Bubble x={655} y={207} t="5" />
    <Bubble x={868} y={207} t="6" />
    <Bubble x={939} y={207} t="2" />
    <Bubble x={1082} y={207} t="7" />
    <Bubble x={1196} y={207} t="D" />
    <Bubble x={1295} y={207} t="8" />
    <Bubble x={1352} y={213} t="C" />
    <Bubble x={1352} y={300} t="B" />
    <Bubble x={1352} y={315} t="2" />
    <Bubble x={1352} y={368} t="A" />
    <Bubble x={1352} y={375} />
    <Bubble x={1338} y={461} t="A" />
    <polygon points="595,370 612,371 706,384 723,388 703,402 610,388" fill="#0059ad" />
    <polygon points="226,194 298,194 547,230 734,257 1258,332 1230,430 205,282" fill="#ababab" />
    <polygon points="205,282 1230,430 1228,459 202,312" fill="#858585" />
    <polygon points="1258,332 1230,430 1228,459" fill="#6f6f6f" />
    <polygon points="640,244 734,257 709,355 616,341" fill="#0073e6" />
    <polygon points="616,341 709,355 706,384 612,371" fill="#0059ad" />
    <path d="M202 312L1228 459L1258 332" fill="none" stroke={RL} strokeDasharray="14 1" shapeRendering="auto" />
    <path d="M547 230L734 257 709 355 522 328zM612 341L709 355" fill="none" stroke="#fff" shapeRendering="auto" />
    <path d="M623 310L718 323" stroke="#ff00ff" strokeWidth="2" shapeRendering="auto" />
    <g shapeRendering="auto">
      <path d="M237 425L241 385" stroke="#0a6fe0" strokeWidth="4" />
      <path d="M242 377l-4 13h8z" fill="#0a6fe0" />
      <path d="M236 425L275 431" stroke="#f00" strokeWidth="4" />
      <path d="M285 432l-12-5v9z" fill="#f00" />
      <text x="233" y="385" fontSize="14" fontFamily="Liberation Sans" fill="none" stroke="#0a6fe0" strokeWidth=".5" textAnchor="middle">Z</text>
      <text x="253" y="416" fontSize="12" fontFamily="Liberation Sans" fill="none" stroke="#1fd01f" strokeWidth=".5" textAnchor="middle">Y</text>
      <text x="279" y="431" fontSize="14" fontFamily="Liberation Sans" fill="none" stroke="#f00" strokeWidth=".5" textAnchor="middle">X</text>
    </g>
  </svg>
);

const App: React.FC = () => (
  <Screen>
    <Global />
    <TitleBar>
      <svg width="16" height="16" viewBox="0 0 16 16"><rect width="16" height="16" rx="3" fill="#0d8ce8" /><path d="M7 2h2v5h5v2H9v5H7V9H2V7h5z" fill="#fff" /></svg>
      <TitleText>广联达BIM钢筋算量软件 GGJ2013 - [C:\Users\Administrator.PC-20141127NRHM\Desktop\白龙村-2016-08-25-13-27-07(2166版).GGJ12]</TitleText>
      <WinControls>
        <WinBtn><svg width="12" height="12"><path d="M1 6.5h10" stroke="#222" /></svg></WinBtn>
        <WinBtn><svg width="12" height="12"><path d="M1.5 3.5h7v7h-7zM3.5 3V1.5h7v7H9" fill="none" stroke="#222" /></svg></WinBtn>
        <WinBtn><svg width="12" height="12"><path d="M1 1l10 10M11 1L1 11" stroke="#222" /></svg></WinBtn>
      </WinControls>
    </TitleBar>

    <Menu>
      <MenuItem $w={48}>文件(F)</MenuItem><MenuItem $w={49}>编辑(E)</MenuItem><MenuItem $w={48}>楼层(L)</MenuItem><MenuItem $w={51}>构件(N)</MenuItem>
      <MenuItem $w={53}>绘图(D)</MenuItem><MenuItem $w={53}>修改(M)</MenuItem><MenuItem $w={64}>钢筋量(Q)</MenuItem><MenuItem $w={50}>视图(V)</MenuItem>
      <MenuItem $w={49}>工具(T)</MenuItem><MenuItem $w={62}>云应用(Y)</MenuItem><MenuItem $w={69}>BIM应用(I)</MenuItem><MenuItem $w={73}>在线服务(S)</MenuItem>
      <MenuItem $w={51}>帮助(H)</MenuItem><MenuItem $w={62}>版本号(B)</MenuItem>
      <Tool $gap={2}><Ico n="doc" /><span>新建变更</span></Tool><Arrow $ml={6} />
      <Tool $ml={15} $gap={0}><Ico n="face" s={14} /><span>广小二</span></Tool>
      <Notice>如何快速布置自定义范..</Notice>
      <Tool $ml={3} $gap={4}><Ico n="user" s={17} /><span>13907298339</span></Tool><Arrow $ml={9} />
      <Tool $ml={9}>造价豆:0</Tool>
      <Tool $ml={9}><Ico n="bell" s={14} /></Tool>
      <More $ml={37}>»</More>
    </Menu>

    <MainToolRow>
      <Bar $h={28} $pr={4}>
        <T2 i="new" ml={4} /><T2 i="open" ml={8} /><Arrow $ml={6} /><T2 i="save" ml={8} /><Sep $ml={6} /><T2 i="undo" ml={6} /><Arrow $ml={7} /><More $ml={19}>»</More>
      </Bar>
      <Bar $h={28} $ml={2} $pr={3}>
        <T2 i="def" t="定义" ml={4} /><T2 i="sum" t="汇总计算" ml={7} /><T2 i="cloud" t="云检查" ml={8} /><T2 i="flat" t="平齐板顶" ml={6} off />
        <T2 i="binoc" t="查找图元" ml={7} /><T2 i="glass" t="查看钢筋量" ml={7} /><T2 i="batch" t="批量选择" ml={7} /><More $ml={39}>»</More>
      </Bar>
      <Bar $h={28} $ml={2}>
        <ThreeDBack><T2 i="cube" t="三维" ml={2} /></ThreeDBack><Arrow $ml={6} />
        <T2 i="top" t="俯视" ml={9} /><Arrow $ml={7} /><T2 i="orbit" t="动态观察" ml={7} /><T2 i="local" t="局部三维" ml={7} off /><Sep $ml={7} />
        <T2 i="full" t="全屏" ml={5} /><T2 i="zoom" t="缩放" ml={7} /><Arrow $ml={7} /><T2 i="pan" t="平移" ml={7} /><Arrow $ml={7} />
        <T2 i="rotate" t="屏幕旋转" ml={7} /><Arrow $ml={3} /><Sep $ml={7} /><T2 i="floor" t="选择楼层" ml={4} /><More $ml={31}>»</More>
      </Bar>
    </MainToolRow>

    <Body>
      <Side>
        <SideHead>
          <span>模块导航栏</span>
          <svg width="30" height="12" viewBox="0 0 30 12"><path d="M4 1h5v6h1v1H7.5v3h-1V8H3V7h1z" fill="#fff" /><path d="M19 2l8 8M27 2l-8 8" stroke="#fff" /></svg>
        </SideHead>
        <SideBtn $mt={2}>工程设置</SideBtn>
        <SideBtn $mt={1}>绘图输入</SideBtn>
        <TreeTools><Ico n="plus" /><Ico n="minus" /></TreeTools>
        <TreeBox>
          <TreeList>
            {tree.map((r, k) => {
              const child = !!r.i;
              return child ? (
                <TreeRow key={k} $branch $last={r.last}>
                  <Trunk />
                  <Node $sel={r.sel}><Ico n={r.i!} s={14} /><span>{r.t}<Code>{r.c}</Code></span></Node>
                </TreeRow>
              ) : (
                <TreeRow key={k} $top>
                  <Chevron open={r.open} />
                  <Node $top><Folder open={r.open} /><span>{r.t}</span></Node>
                </TreeRow>
              );
            })}
            <TreeRow $branch>
              <Node><Ico n="rm" s={14} /><span>逗引</span><Ico n="raft" s={14} /><NewMark>NEW</NewMark></Node>
            </TreeRow>
          </TreeList>
          <VScroll>
            <ScrollEnd $h={69} $pos="flex-start"><svg width="9" height="9" viewBox="0 0 9 9"><path d="M1 6l3.5-3.5L8 6" fill="none" stroke="#444" strokeWidth="1.5" /></svg></ScrollEnd>
            <ScrollThumb />
            <ScrollEnd $h={31} $pos="flex-end"><svg width="9" height="9" viewBox="0 0 9 9"><path d="M1 3l3.5 3.5L8 3" fill="none" stroke="#444" strokeWidth="1.5" /></svg></ScrollEnd>
          </VScroll>
        </TreeBox>
        <SideBtn $mt={1}>单构件输入</SideBtn>
        <SideBtn $mt={1}>报表预览</SideBtn>
      </Side>

      <Main>
        <Row>
          <Bar $h={26} $pr={5}>
            <Grip />
            <T2 i="del" t="删除" ml={3} /><Sep $ml={6} /><T2 i="copy" t="复制" ml={5} /><T2 i="mirror" t="镜像" ml={8} /><Sep $ml={6} />
            <T2 i="move" t="移动" ml={5} /><T2 i="rot" t="旋转" ml={7} /><Sep $ml={7} /><T2 i="ext" t="延伸" ml={5} off /><T2 i="trim" t="修剪" ml={7} off /><Sep $ml={6} />
            <T2 i="brk" t="打断" ml={6} off /><T2 i="merge" t="合并" ml={7} /><T2 i="split" t="分割" ml={8} /><Sep $ml={5} />
            <T2 i="align" t="对齐" ml={6} off /><Arrow $ml={6} /><T2 i="offset" t="偏移" ml={5} /><T2 i="stretch" t="拉伸" ml={6} /><Sep $ml={7} /><T2 i="grip" t="设置夹点" ml={5} />
          </Bar>
        </Row>
        <Row $mt={1}>
          <Bar $h={25} $pr={4}>
            <Grip />
            <Combo $w={58}><span>基础层</span><ComboArrow><Arrow /></ComboArrow></Combo>
            <Combo $w={70} $ml={2}><span>基础</span><ComboArrow><Arrow /></ComboArrow></Combo>
            <Combo $w={70} $ml={2}><span>筏板基础</span><ComboArrow><Arrow /></ComboArrow></Combo>
            <Combo $w={70} $ml={2}><span>FB-1</span><ComboArrow><Arrow /></ComboArrow></Combo>
            <Sep $ml={5} />
            <T2 i="attr" t="属性" ml={4} />
            <HotTool $ml={4}><Ico n="edit" /><span>编辑钢筋</span></HotTool>
            <T2 i="list" t="构件列表" ml={3} />
            <T2 i="pick" t="拾取构件" ml={8} />
          </Bar>
          <Bar $h={25} $ml={74} $pr={2}>
            <Grip />
            <T2 i="two" t="两点" ml={3} /><T2 i="para" t="平行" ml={7} /><T2 i="angle" t="点角" ml={8} /><Arrow $ml={6} /><T2 i="arc3" t="三点辅轴" ml={7} /><Arrow $ml={7} /><T2 i="del" t="删除辅轴" ml={7} />
            <HotTool $ml={4} $fill="#b3d7f2"><Ico n="dim" /><span>尺寸标注</span></HotTool><ArrowBox><Arrow /></ArrowBox>
          </Bar>
        </Row>
        <FloatGrip><Grip $w={5} /></FloatGrip>
        <Row>
          <Bar $h={27} $pr={5}>
            <Grip $w={6} />
            <HotTool $fill="#e8f2fb"><Ico n="sel" /><span>选择</span></HotTool><Arrow $ml={3} /><Sep $ml={7} />
            <T2 i="pt" t="点" ml={6} /><Sep $ml={6} /><T2 i="line" t="直线" ml={5} /><T2 i="arc" t="三点画弧" ml={7} /><Arrow $ml={6} />
            <Combo $w={56} $ml={6}><span /><ComboArrow $plain><Arrow /></ComboArrow></Combo>
            <T2 i="rect" t="矩形" ml={4} /><Sep $ml={7} /><T2 i="auto" t="自动生成板" ml={5} /><T2 i="beam" t="按梁分割" ml={7} /><T2 i="varsec" t="设置筏板变截面" ml={7} />
            <T2 i="view" t="查看板内钢筋" ml={7} /><T2 i="slope" t="设置所有边坡" ml={7} /><Arrow $ml={6} /><T2 i="noslope" t="取消所有边坡" ml={8} /><Arrow $ml={7} />
            <T2 i="s3" t="三点定义斜筏板" ml={7} /><Arrow $ml={7} /><T2 i="height" t="查改标高" ml={7} />
          </Bar>
        </Row>
        <Viewport><Scene /></Viewport>
        <Row $mt={3}>
          <Bar $h={23} $pr={0}>
            <Grip />
            <T2 i="ortho" t="正交" ml={3} />
            <HotTool $ml={3}><Ico n="snap" /><span>对象捕捉</span></HotTool>
            <HotTool><Ico n="dyn" /><span>动态输入</span></HotTool>
          </Bar>
        </Row>
        <Bottom>
          <DockStrip>
            <DockClose><svg width="10" height="10" viewBox="0 0 10 10"><path d="M1 1l8 8M9 1L1 9" stroke="#b22" strokeWidth="1.4" /></svg></DockClose>
            <DockDots />
          </DockStrip>
          <DockBody>
            <GridBar>
              <Tool $ml={5}><Ico n="first" s={14} /></Tool><Tool $ml={10}><Ico n="prev" s={14} /></Tool><Tool $ml={9}><Ico n="next" s={14} /></Tool><Tool $ml={10}><Ico n="last" s={14} /></Tool>
              <Sep $ml={6} /><Tool $ml={6}><Ico n="up" s={14} /></Tool><Tool $ml={9}><Ico n="down" s={14} /></Tool><Sep $ml={8} />
              <T2 i="ins" t="插入" ml={5} off /><T2 i="delr" t="删除" ml={7} off /><T2 i="scale" t="缩尺配筋" ml={7} off /><T2 i="info" t="钢筋信息" ml={7} off />
              <T2 i="lib" t="钢筋图库" ml={7} /><T2 i="other" t="其他" ml={7} /><Arrow $ml={3} /><Tool $ml={9}>关闭</Tool><Sep $ml={8} />
              <Tool $ml={6}>单构件钢筋总重(kg)：0</Tool>
            </GridBar>
            <TableBox>
              <Head>{head.map(([h, cur], k) => <HeadCell key={k} $cur={cur}>{h}</HeadCell>)}</Head>
              <DataRow>
                <DataCell $tone="#fbd999"><Code>1*</Code></DataCell>
                <DataCell $tone="#d6e8f7" $black />
                {head.slice(2).map((_, k) => <DataCell key={k} />)}
              </DataRow>
              <TableFill />
              <HScroll>
                <HEnd $w={18}><svg width="9" height="9" viewBox="0 0 9 9"><path d="M6 1L2.5 4.5 6 8" fill="none" stroke="#444" strokeWidth="1.5" /></svg></HEnd>
                <HThumb /><HTrack />
                <HEnd $w={11}><svg width="9" height="9" viewBox="0 0 9 9"><path d="M3 1l3.5 3.5L3 8" fill="none" stroke="#444" strokeWidth="1.5" /></svg></HEnd>
              </HScroll>
            </TableBox>
          </DockBody>
        </Bottom>
      </Main>
    </Body>

    <Status>
      <StatusCell $w={147} $mono>X=269969 Y=11462</StatusCell>
      <StatusCell $w={77}>层高:<StatusMono>3.47m</StatusMono></StatusCell>
      <StatusCell $w={97}>底标高:<StatusMono>-3.5m</StatusMono></StatusCell>
      <StatusCell $w={47} $mono>1(1)</StatusCell>
      <StatusCell $w={913}>按鼠标左键指定第一个角点，或拾取构件图元</StatusCell>
      <StatusCell $w={70} $mono>484.9 FPS</StatusCell>
    </Status>

    <Task>
      <StartBtn><FaWindows size={17} color="#fff" /></StartBtn>
      <Search>
        <svg width="20" height="20" viewBox="0 0 20 20"><circle cx="10" cy="10" r="8" fill="none" stroke="#e8e8e8" strokeWidth="2" /></svg>
        <SearchText>在这里输入你要搜索的内容</SearchText>
        <SearchMic><Mic size={17} /></SearchMic>
      </Search>
      <Slot><svg width="22" height="18" viewBox="0 0 22 18"><path d="M6 1h10v16H6zM3 4H1v10h2M19 4h2v10h-2" fill="none" stroke="#fff" strokeWidth="1.2" /></svg></Slot>
      <Slot><svg width="24" height="24" viewBox="0 0 24 24"><g fill="#e8e8e8"><path d="M11 11C6 11 2 9 2 5c0-3 4-4 6-2 2 2 3 5 3 8zM13 11c0-5 2-9 6-9 3 0 4 4 2 6-2 2-5 3-8 3zM13 13c5 0 9 2 9 6 0 3-4 4-6 2-2-2-3-5-3-8zM11 13c0 5-2 9-6 9-3 0-4-4-2-6 2-2 5-3 8-3z" /></g></svg></Slot>
      <Slot><svg width="22" height="22" viewBox="0 0 22 22"><path d="M17 5a8 8 0 1 0 2 8c-1 4-6 6-9 4-3-2-3-6 0-8 2-1 5 0 5 2s-3 3-4 1" fill="none" stroke="#bbb" strokeWidth="1.5" /></svg></Slot>
      <Slot $ml={3}><FaEdge size={24} color="#1478d4" /></Slot>
      <Slot><svg width="22" height="24" viewBox="0 0 22 24"><path d="M1 7h20l-1 16H2z" fill="#fff" /><path d="M7 7c0-8 8-8 8 0" fill="none" stroke="#fff" strokeWidth="1.5" /><path d="M7 11h3.500v3.500H7zM11.500 11H15v3.500h-3.500zM7 15.500h3.500V19H7zM11.500 15.500H15V19h-3.500z" fill="#111" /></svg></Slot>
      <Slot><svg width="24" height="22" viewBox="0 0 24 22"><path d="M1 2h8l2 3h12v16H1z" fill="#f4d06a" /><path d="M1 8h22v13H1z" fill="#f8e08f" /><rect x="8" y="12" width="8" height="9" fill="#2aa4e0" /></svg></Slot>
      <Slot $w={48.5}><FaInternetExplorer size={25} color="#2d8fdc" /></Slot>
      <Slot $w={49.5} $run><svg width="24" height="26" viewBox="0 0 24 26"><path d="M19 3c-9-3-16 3-16 11 0 6 4 10 9 10s9-4 9-9c0-4-3-6-6-6-3 0-5 2-4 5h3c0-1 0-2 1-2s2 1 2 3-2 4-5 4-5-3-5-6c0-5 5-8 12-6z" fill="#1f8fe0" /></svg></Slot>
      <Slot $run><svg width="24" height="24" viewBox="0 0 24 24"><circle cx="12" cy="12" r="10" fill="#7ec83c" stroke="#cfe8b0" strokeWidth="2" /><path d="M6 10h12l-5-4M6 14h12l-5 4" fill="none" stroke="#fff" strokeWidth="2" /></svg></Slot>
      <Slot $w={48.5} $run $on><svg width="24" height="26" viewBox="0 0 24 26"><rect width="24" height="26" rx="5" fill="#0e95ee" /><path d="M11 4h2v8h7v2h-3v2c0 3-2 5-4 5h-2c-2 0-4-2-4-5v-2H4v-2h7z" fill="none" stroke="#fff" strokeWidth="1.5" /></svg></Slot>
      <Slot $run><svg width="24" height="26" viewBox="0 0 24 26"><rect width="24" height="26" rx="3" fill="#f39b22" /><rect x="3" y="5" width="16" height="18" fill="#f7eeca" transform="rotate(-8 11 14)" /><path d="M6 11h9M6 15h9M6 19h6" stroke="#999" /><path d="M14 13L21 2" stroke="#9a4a10" strokeWidth="2" /></svg></Slot>
      <Cpu><span>31%</span><span>CPU使用</span></Cpu>
      <Tray $w={28}><ChevronUp size={18} color="#ddd" /></Tray>
      <Tray $w={23}><svg width="18" height="16" viewBox="0 0 18 16"><path d="M3 1v3M6 1v3M1 4h7v3H1z" stroke="#fff" fill="#fff" /><rect x="5" y="6" width="11" height="8" fill="#222" stroke="#ddd" /><rect x="6" y="7" width="6" height="6" fill="#ddd" /></svg></Tray>
      <Tray $w={25}><Wifi size={16} color="#ccc" /></Tray>
      <Tray $w={23}><Volume1 size={18} color="#ddd" /></Tray>
      <Tray $w={30}><Keyboard size={22} color="#ddd" strokeWidth={1.2} /></Tray>
      <Tray $w={27}><TrayIme>英</TrayIme></Tray>
      <Tray $w={30}><svg width="18" height="20" viewBox="0 0 18 20"><rect x="1" y="1" width="16" height="18" rx="3" fill="#ef4d1f" transform="rotate(-6 9 10)" /><path d="M13 6c-3-2-8-1-7 2 1 2 6 1 6 4s-5 3-7 1" fill="none" stroke="#fff" strokeWidth="2.2" /></svg></Tray>
      <ClockBox $w={78}><span>15:33</span><span>2017/10/15</span></ClockBox>
      <Tray $w={36}>
        <svg width="16" height="22" viewBox="0 0 16 22"><path d="M1 1h14v12H9l-3 3v-3H1z" fill="#fff" /><path d="M3 4h10M3 7h10M3 10h10" stroke="#333" /></svg>
        <Badge>2</Badge>
      </Tray>
    </Task>

    <Ball>74</Ball>
    <ImeBar>
      <ImeLogo>S</ImeLogo>
      <ImePanel>
        <ImeText>英</ImeText>
        <ImeSlot $ml={8}>
          <svg width="12" height="14" viewBox="0 0 12 14"><path d="M2 3l2 1M9 6c1 2 0 4-2 5" fill="none" stroke="#1f6fc6" strokeWidth="2" /></svg>
        </ImeSlot>
        <ImeSlot $ml={8}><Mic size={16} strokeWidth={3} /></ImeSlot>
        <ImeSlot $ml={6}><svg width="16" height="14" viewBox="0 0 16 14"><rect width="16" height="14" rx="2" fill="#1f6fc6" /><path d="M3 4h10M3 7h10M5 10h6" stroke="#fff" strokeDasharray="1.5 1" /></svg></ImeSlot>
        <ImeSlot $ml={8}><svg width="16" height="16" viewBox="0 0 16 16"><circle cx="6" cy="4" r="3" fill="#c0c8d0" /><path d="M1 14c0-4 2-6 5-6s5 2 5 6z" fill="#c0c8d0" /><rect x="9" y="9" width="6" height="6" fill="#dfe5ea" stroke="#a9b3bd" /></svg></ImeSlot>
        <ImeSlot $ml={4}><svg width="15" height="15" viewBox="0 0 15 15"><path d="M4 1l3 1 3-1 5 3-2 3-2-1v8H4V6L2 7 0 4z" fill="#1f6fc6" /></svg></ImeSlot>
        <ImeSlot $ml={6}><svg width="15" height="15" viewBox="0 0 15 15"><path d="M14 3l-3 3-2-2 3-3c-3-1-6 1-5 5L1 12l2 2 6-6c4 1 6-2 5-5z" fill="#1f6fc6" /></svg></ImeSlot>
      </ImePanel>
    </ImeBar>
  </Screen>
);
export default App;
